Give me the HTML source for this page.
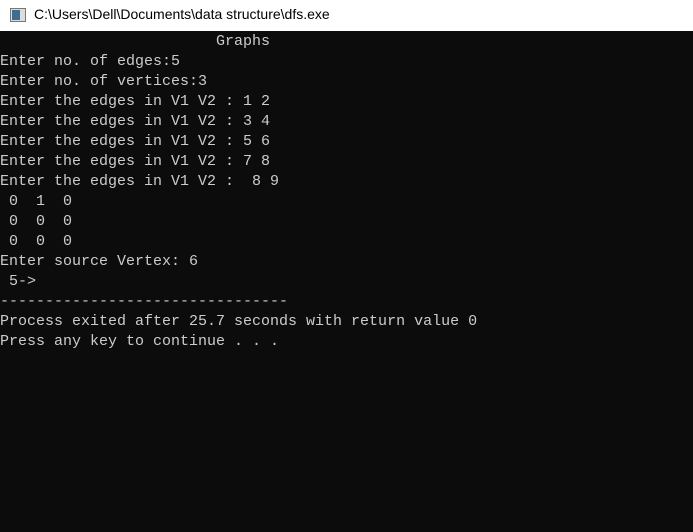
<!DOCTYPE html>
<html><head><style>
html,body{margin:0;padding:0;width:693px;height:532px;overflow:hidden;background:#0c0c0c}
.t{height:31px;background:#fff;position:relative;font-family:"Liberation Sans",sans-serif;font-size:14px;color:#000}
.t span{position:absolute;left:34px;top:6px}
.ic{position:absolute;left:10px;top:8px;width:14px;height:12px;border:1px solid #777;background:#ddd}
.ic:before{content:"";position:absolute;left:1px;top:1px;width:8px;height:10px;background:#3a6f8f}
pre{margin:0;padding:0;position:absolute;left:0;top:32px;font-family:"Liberation Mono",monospace;font-size:15px;line-height:20px;color:#cccccc}
</style></head><body>
<div class="t"><div class="ic"></div><span>C:\Users\Dell\Documents\data structure\dfs.exe</span></div>
<pre>                        Graphs
Enter no. of edges:5
Enter no. of vertices:3
Enter the edges in V1 V2 : 1 2
Enter the edges in V1 V2 : 3 4
Enter the edges in V1 V2 : 5 6
Enter the edges in V1 V2 : 7 8
Enter the edges in V1 V2 :  8 9
 0  1  0
 0  0  0
 0  0  0
Enter source Vertex: 6
 5-&gt;
--------------------------------
Process exited after 25.7 seconds with return value 0
Press any key to continue . . .</pre>
</body></html>
